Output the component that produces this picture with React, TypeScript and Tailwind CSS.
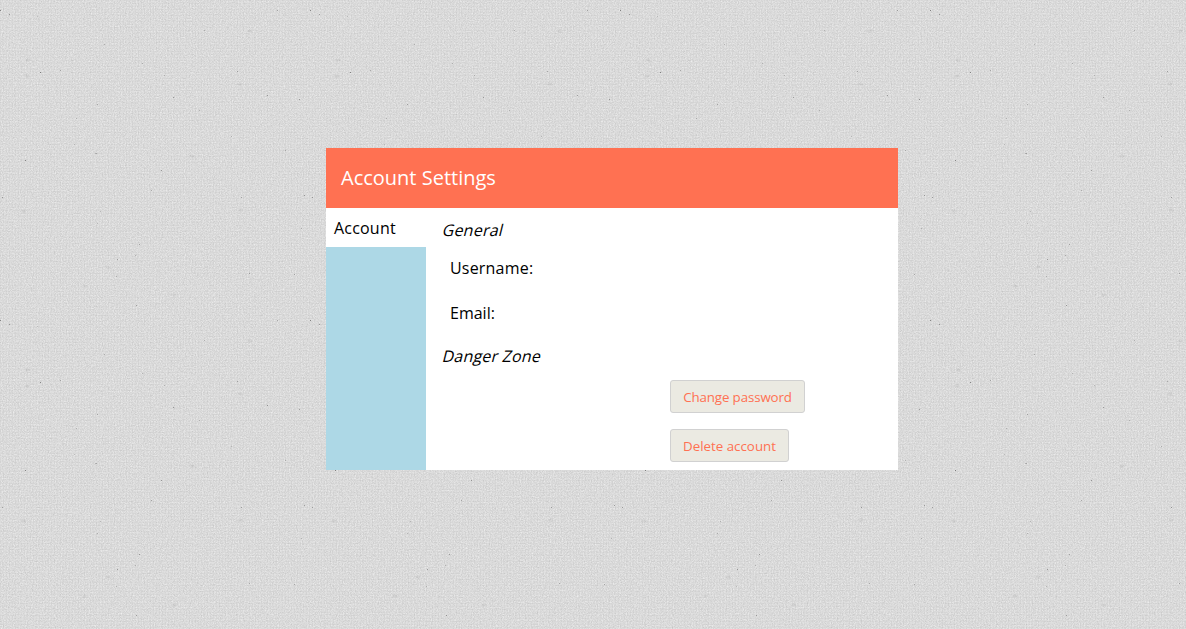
const specks: [number, number, number][] = [
  [0, 10, 0.4], [9, 14, 0.3], [37, 16, 0.15], [104, 44, 0.2], [204, 30, 0.2], [142, 63, 0.2],
  [40, 72, 0.4], [60, 70, 0.25], [164, 75, 0.2], [173, 97, 0.3], [97, 104, 0.25], [199, 110, 0.2],
  [267, 95, 0.3], [299, 99, 0.3], [76, 118, 0.2], [231, 136, 0.2], [74, 144, 0.15], [95, 153, 0.2],
  [96, 153, 0.25], [25, 160, 0.4], [161, 170, 0.3], [285, 150, 0.2], [151, 190, 0.25], [241, 197, 0.3],
  [304, 195, 0.3], [2, 197, 0.3], [97, 223, 0.2], [100, 211, 0.2], [301, 228, 0.2], [139, 244, 0.3],
  [117, 259, 0.3], [135, 255, 0.2], [116, 276, 0.2], [249, 273, 0.25], [294, 274, 0.25], [237, 71, 0.25],
  [277, 10, 0.25], [136, 305, 0.3],
];

const smudges: [number, number][] = [
  [24, 211], [250, 31], [28, 60], [27, 76], [241, 210], [108, 267], [174, 295], [85, 286], [240, 84], [192, 156],
];

function PaperTexture() {
  return (
    <svg className="absolute inset-0 h-full w-full" aria-hidden="true">
      <defs>
        <filter id="grain" x="0" y="0" width="100%" height="100%" colorInterpolationFilters="sRGB">
          <feTurbulence type="fractalNoise" baseFrequency="0.83" numOctaves="3" seed="4" />
          <feColorMatrix values="0.17 0 0 0 0.774 0.17 0 0 0 0.774 0.17 0 0 0 0.774 0 0 0 0 1" />
        </filter>
        <pattern id="weave" width="3" height="3" patternUnits="userSpaceOnUse">
          <path d="M0 0h3v1H0z" fill="#000" fillOpacity="0.012" />
          <path d="M0 0h1v3H0z" fill="#000" fillOpacity="0.012" />
          <path d="M1 1h1v1H1z" fill="#fff" fillOpacity="0.12" />
        </pattern>
        <pattern id="specks" width="310" height="310" patternUnits="userSpaceOnUse">
          {smudges.map(([x, y]) => (
            <ellipse key={`${x}-${y}`} cx={x} cy={y} rx="2.5" ry="1.5" fill="#000" fillOpacity="0.05" />
          ))}
          {specks.map(([x, y, o]) => (
            <rect key={`${x}-${y}`} x={x} y={y} width="1" height="1" fill="#000" fillOpacity={o} />
          ))}
        </pattern>
      </defs>
      <rect width="100%" height="100%" filter="url(#grain)" />
      <rect width="100%" height="100%" fill="url(#weave)" />
      <rect width="100%" height="100%" fill="url(#specks)" />
    </svg>
  );
}

function DialogButton({ children, className }: { children: string; className: string }) {
  return (
    <button
      type="button"
      className={`h-[33px] rounded-[3px] border border-[#d1d1d1] bg-[#ebeae2] px-3 text-[13.3333px] leading-[18px] text-[#ff7152] ${className}`}
    >
      {children}
    </button>
  );
}

export default function App() {
  return (
    <div className="relative h-screen overflow-hidden bg-[#dadada] pl-[326px] pt-[148px] font-['Open_Sans','Noto_Sans',sans-serif] text-base text-black">
      <PaperTexture />
      <section className="relative flex h-[322px] w-[572px] flex-col bg-white">
        <header className="flex h-[60px] items-center bg-[#ff7152] px-[15px] pb-0.5">
          <h1 className="text-[20px] leading-[27px] text-white">Account Settings</h1>
        </header>
        <div className="flex flex-1">
          <nav className="w-[100px] bg-[#add8e6]">
            <div className="h-[39px] bg-white px-2 pt-2 leading-6 tracking-[0.2px]">Account</div>
          </nav>
          <main className="flex flex-1 flex-col items-start pl-4">
            <h2 className="ml-px mt-[10px] -skew-x-[14deg] leading-6 tracking-[0.25px]">General</h2>
            <div className="pl-2 pt-[14px] leading-6 tracking-[0.2px]">Username:</div>
            <div className="pl-2 pt-[21px] leading-6">Email:</div>
            <h2 className="ml-px mt-[19px] -skew-x-[14deg] leading-6 tracking-[0.2px]">Danger Zone</h2>
            <div className="flex flex-col items-start gap-4 pl-[228px] pt-3">
              <DialogButton className="w-[135px] tracking-[-0.12px]">Change password</DialogButton>
              <DialogButton className="w-[119px]">Delete account</DialogButton>
            </div>
          </main>
        </div>
      </section>
    </div>
  );
}
